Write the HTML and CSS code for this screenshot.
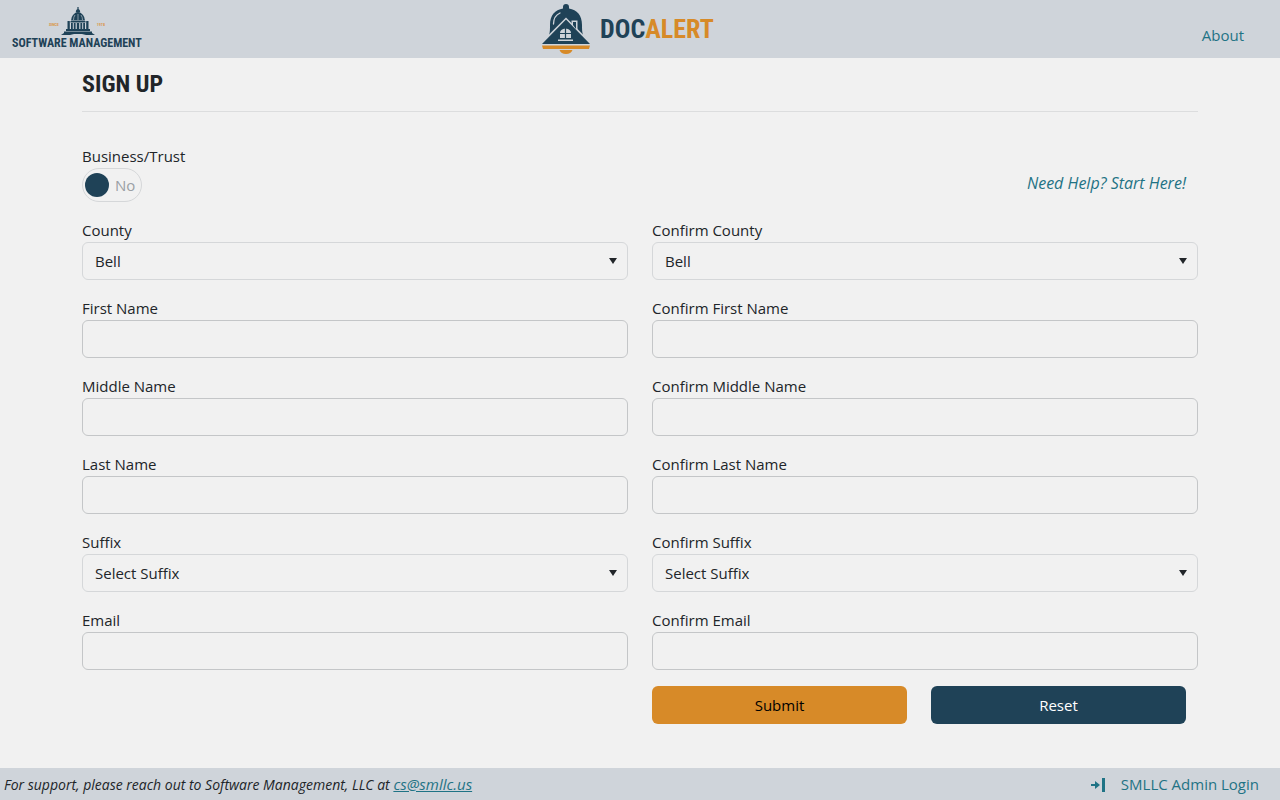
FILE: index.html
```html
<!DOCTYPE html>
<html lang="en">
<head>
  <meta charset="UTF-8">
  <meta name="viewport" content="width=device-width, initial-scale=1.0">
  <title>DocAlert - Sign Up</title>
  <link rel="stylesheet" href="styles.css">
</head>
<body>
  <header class="navbar">
    <a class="company" href="#">
      <span class="company-top">
        <span class="since">SINCE</span>
        <svg class="dome" viewBox="0 0 34 28" aria-hidden="true">
          <g fill="#1f4257">
            <path d="M16.400 0h1.200v3h-1.200zM14.800 5.500q0-3.500 2.200-3.500t2.200 3.500z"/>
            <path d="M10 13.500q.5-7 7-8.500 6.500 1.500 7 8.500z"/>
            <path d="M9.500 14h15v1.500h-15zM10 16h1.800v6H10zM12.800 16h1.800v6h-1.800zM15.800 16h2.400v6h-2.400zM19.400 16h1.800v6h-1.800zM22.200 16H24v6h-1.800z"/>
            <path d="M6.500 14h2.300v8H6.500zM25.200 14h2.300v8h-2.300z"/>
            <path d="M5 22h24v2H5zM3 24.500h28v1.500H3zM0 28l3-2h7l3-1h8l3 1h7l3 2h-9l-4-1h-8l-4 1z"/>
          </g>
          <path d="M14 8q-1.500 2-1.500 5M20 8q1.500 2 1.500 5M17 7v6" fill="none" stroke="#cfd4da" stroke-width=".6"/>
        </svg>
        <span class="since">1978</span>
      </span>
      <span class="company-name">SOFTWARE MANAGEMENT</span>
    </a>

    <a class="brand" href="#">
      <svg class="bell" viewBox="0 0 48 50" aria-hidden="true">
        <path d="M7 31c1-3 1-6 1-10C8 11 13 6 21 4.500V3a3 3 0 0 1 6 0v1.500C35 6 40 11 40 21c0 4 0 7 1 10v6H7z" fill="#1f4257"/>
        <path d="M11.500 20q0-8 6.500-11" fill="none" stroke="#cfd4da" stroke-width="1.300" stroke-linecap="round"/>
        <path d="M24 13.500L-1.500 39v3h51v-3L41 30.500z" fill="#cfd4da"/>
        <path d="M29.500 24v-7.500h6V27z" fill="#cfd4da"/>
        <path d="M24 15.500L0 40h48L24 15.500zM31 21v-3h3v7z" fill="#1f4257"/>
        <path d="M18 34v-5q0-4 5.500-4.500Q29 25 29 29v5z" fill="#cfd4da"/>
        <path d="M23.500 24v11M17.500 29.500h12" stroke="#1f4257" stroke-width="1.200"/>
        <path d="M16 35.500h15v1.500H16z" fill="#cfd4da"/>
        <path d="M0 41.500h48l-1 3.500H1zM17.500 46h13q-1.500 4-6.500 4t-6.500-4z" fill="#d78a28"/>
      </svg>
      <span class="brand-name">DOC<span class="orange">ALERT</span></span>
    </a>

    <a class="about" href="#">About</a>
  </header>

  <main class="container">
    <h1>SIGN UP</h1>
    <hr>

    <form>
      <div class="top-row">
        <div>
          <label for="business">Business/Trust</label>
          <div class="switch">
            <input type="checkbox" id="business">
            <span>No</span>
          </div>
        </div>
        <a class="help" href="#">Need Help? Start Here!</a>
      </div>

      <div class="fields">
        <div class="field">
          <label for="county">County</label>
          <div class="select"><select id="county"><option>Bell</option></select></div>
        </div>
        <div class="field">
          <label for="confirmCounty">Confirm County</label>
          <div class="select"><select id="confirmCounty"><option>Bell</option></select></div>
        </div>
        <div class="field">
          <label for="firstName">First Name</label>
          <input type="text" id="firstName">
        </div>
        <div class="field">
          <label for="confirmFirstName">Confirm First Name</label>
          <input type="text" id="confirmFirstName">
        </div>
        <div class="field">
          <label for="middleName">Middle Name</label>
          <input type="text" id="middleName">
        </div>
        <div class="field">
          <label for="confirmMiddleName">Confirm Middle Name</label>
          <input type="text" id="confirmMiddleName">
        </div>
        <div class="field">
          <label for="lastName">Last Name</label>
          <input type="text" id="lastName">
        </div>
        <div class="field">
          <label for="confirmLastName">Confirm Last Name</label>
          <input type="text" id="confirmLastName">
        </div>
        <div class="field">
          <label for="suffix">Suffix</label>
          <div class="select"><select id="suffix"><option>Select Suffix</option></select></div>
        </div>
        <div class="field">
          <label for="confirmSuffix">Confirm Suffix</label>
          <div class="select"><select id="confirmSuffix"><option>Select Suffix</option></select></div>
        </div>
        <div class="field">
          <label for="email">Email</label>
          <input type="email" id="email">
        </div>
        <div class="field">
          <label for="confirmEmail">Confirm Email</label>
          <input type="email" id="confirmEmail">
        </div>
        <div class="buttons">
          <button type="submit" class="btn submit">Submit</button>
          <button type="reset" class="btn reset">Reset</button>
        </div>
      </div>
    </form>
  </main>

  <footer class="footer">
    <p class="support">For support, please reach out to Software Management, LLC at <a href="mailto:cs@smllc.us">cs@smllc.us</a></p>
    <a class="admin" href="#">
      <svg class="login-icon" viewBox="0 0 16 16" aria-hidden="true">
        <path d="M1 8h4V5l5 4-5 4v-3H1zM12 2h3v14h-3z" fill="#1f7385"/>
      </svg>
      SMLLC Admin Login
    </a>
  </footer>
</body>
</html>
```
FILE: styles.css
```css
* {
  box-sizing: border-box;
}
body {
  margin: 0;
  min-height: 100vh;
  display: flex;
  flex-direction: column;
  background: #f1f1f1;
  color: #212529;
  font-family: "Segoe UI", "Open Sans", "Noto Sans", sans-serif;
  font-size: 15px;
  line-height: 24px;
}
a {
  color: #1f7385;
}

/* Header */
.navbar {
  display: grid;
  grid-template-columns: 1fr auto 1fr;
  align-items: center;
  height: 58px;
  padding: 0 12px;
  background: #cfd4da;
}
.company,
.brand,
.about,
.help,
.admin {
  text-decoration: none;
}
.company {
  justify-self: start;
  display: flex;
  flex-direction: column;
  align-items: center;
  color: #1f4257;
}
.company-top {
  display: flex;
  align-items: center;
  gap: 2px;
}
.dome {
  width: 34px;
  height: 28px;
}
.since {
  color: #d9974a;
  font-family: "Roboto Condensed", "Liberation Sans Narrow", "Liberation Sans", sans-serif;
  font-size: 4px;
  font-weight: bold;
  line-height: 4px;
  padding-top: 8px;
}
.company-name {
  font-family: "Roboto Condensed", "Liberation Sans Narrow", "Liberation Sans", sans-serif;
  font-size: 12px;
  font-weight: bold;
  line-height: 16px;
}
.brand {
  display: flex;
  align-items: center;
  gap: 10px;
  padding-right: 24px;
  color: #1f4257;
}
.bell {
  width: 48px;
  height: 50px;
}
.brand-name {
  font-family: "Roboto Condensed", "Liberation Sans Narrow", "Liberation Sans", sans-serif;
  font-size: 26px;
  font-weight: bold;
}
.orange {
  color: #d78a28;
}
.about {
  justify-self: end;
  padding: 12px 24px 0 0;
}

/* Sign up form */
.container {
  flex: 1;
  width: 100%;
  max-width: 1140px;
  margin: 0 auto;
  padding: 8px 12px 44px;
}
h1 {
  margin: 0 0 9px;
  font-family: "Roboto Condensed", "Liberation Sans Narrow", "Liberation Sans", sans-serif;
  font-size: 24px;
  line-height: 36px;
}
hr {
  margin: 0 0 32px;
  border: 0;
  border-top: 1px solid #dcddde;
}
.top-row {
  display: flex;
  justify-content: space-between;
  align-items: center;
  margin-bottom: 16px;
}
label {
  display: block;
}
.switch {
  display: inline-flex;
  align-items: center;
  gap: 6px;
  width: 60px;
  height: 34px;
  padding: 0 2px;
  border: 1px solid #d5d7d9;
  border-radius: 17px;
  color: #9a9fa5;
  vertical-align: top;
}
.switch input {
  appearance: none;
  flex: none;
  width: 24px;
  height: 24px;
  margin: 0;
  border-radius: 50%;
  background: #1f4257;
}
.help {
  padding: 20px 12px 0 0;
  font-size: 16px;
  font-style: italic;
}
.fields {
  display: grid;
  grid-template-columns: 1fr 1fr;
  gap: 16px 24px;
}
.field input,
.field select {
  display: block;
  width: 100%;
  height: 38px;
  padding: 0 12px;
  border: 1px solid #c4c6c8;
  border-radius: 6px;
  background: transparent;
  color: inherit;
  font: inherit;
}
.field select {
  appearance: none;
  border-color: #d5d7d9;
}
.select {
  position: relative;
}
.select::after {
  content: "";
  position: absolute;
  top: 16px;
  right: 11px;
  border: 4px solid transparent;
  border-top: 6px solid #212529;
  border-bottom: 0;
  pointer-events: none;
}
.buttons {
  grid-column: 2;
  display: flex;
  gap: 24px;
  padding-right: 12px;
}
.btn {
  flex: 1;
  height: 38px;
  border: 0;
  border-radius: 6px;
  font: inherit;
  cursor: pointer;
}
.submit {
  background: #d78a28;
  color: #000;
}
.reset {
  background: #1f4257;
  color: #fff;
}

/* Footer */
.footer {
  display: flex;
  justify-content: space-between;
  align-items: center;
  height: 32px;
  padding: 0 21px 0 4px;
  background: #cfd4da;
}
.support {
  margin: 0;
  font-size: 14px;
  font-style: italic;
}
.support a {
  font-size: 15px;
}
.admin {
  display: flex;
  align-items: center;
  gap: 15px;
}
.login-icon {
  width: 16px;
  height: 16px;
}
```
